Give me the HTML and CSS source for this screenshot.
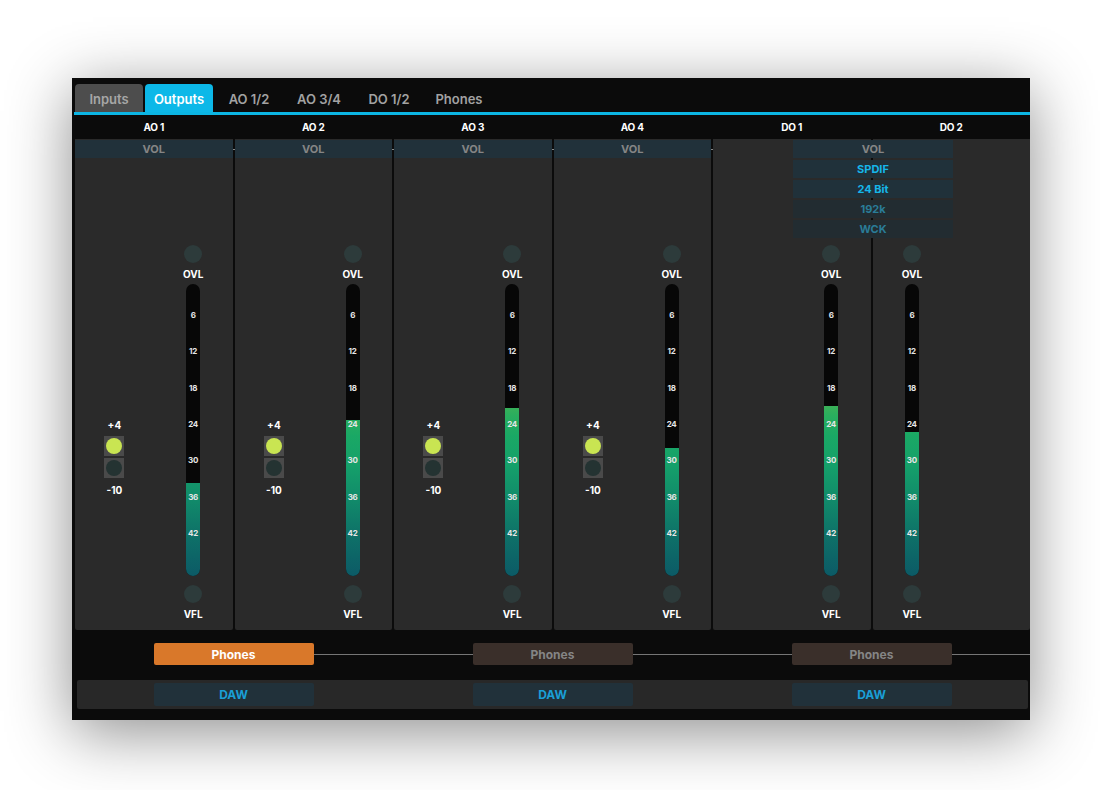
FILE: index.html
```html
<!DOCTYPE html>
<html>
<head>
<meta charset="utf-8">
<link rel="stylesheet" href="styles.css">
</head>
<body>
<div class="window">
  <nav class="tabs">
    <div class="tab tab-dim">Inputs</div>
    <div class="tab tab-active">Outputs</div>
    <div class="tab">AO 1/2</div>
    <div class="tab">AO 3/4</div>
    <div class="tab">DO 1/2</div>
    <div class="tab">Phones</div>
  </nav>

  <div class="mixer">
    <!-- AO 1/2 -->
    <section class="pair">
      <div class="pair-head"><div class="ch-name">AO 1</div><div class="ch-name">AO 2</div></div>
      <div class="pair-body">
        <div class="strip">
          <div class="vol">VOL</div>
          <div class="strip-main">
            <div class="switch-side">
              <div class="lbl">+4</div>
              <div class="sw sw-first"><span class="dot dot-on"></span></div>
              <div class="sw"><span class="dot"></span></div>
              <div class="lbl lbl-low">-10</div>
            </div>
            <div class="meter-side">
              <div class="led"></div>
              <div class="lbl lbl-led">OVL</div>
              <div class="meter"><div class="fill" style="height:93px"></div><div class="scale"><span>6</span><span>12</span><span>18</span><span>24</span><span>30</span><span>36</span><span>42</span></div></div>
              <div class="led led-bottom"></div>
              <div class="lbl lbl-led">VFL</div>
            </div>
          </div>
        </div>
        <div class="strip">
          <div class="vol">VOL</div>
          <div class="strip-main">
            <div class="switch-side">
              <div class="lbl">+4</div>
              <div class="sw sw-first"><span class="dot dot-on"></span></div>
              <div class="sw"><span class="dot"></span></div>
              <div class="lbl lbl-low">-10</div>
            </div>
            <div class="meter-side">
              <div class="led"></div>
              <div class="lbl lbl-led">OVL</div>
              <div class="meter"><div class="fill" style="height:156px"></div><div class="scale"><span>6</span><span>12</span><span>18</span><span>24</span><span>30</span><span>36</span><span>42</span></div></div>
              <div class="led led-bottom"></div>
              <div class="lbl lbl-led">VFL</div>
            </div>
          </div>
        </div>
      </div>
    </section>

    <!-- AO 3/4 -->
    <section class="pair">
      <div class="pair-head"><div class="ch-name">AO 3</div><div class="ch-name">AO 4</div></div>
      <div class="pair-body">
        <div class="strip">
          <div class="vol">VOL</div>
          <div class="strip-main">
            <div class="switch-side">
              <div class="lbl">+4</div>
              <div class="sw sw-first"><span class="dot dot-on"></span></div>
              <div class="sw"><span class="dot"></span></div>
              <div class="lbl lbl-low">-10</div>
            </div>
            <div class="meter-side">
              <div class="led"></div>
              <div class="lbl lbl-led">OVL</div>
              <div class="meter"><div class="fill" style="height:168px"></div><div class="scale"><span>6</span><span>12</span><span>18</span><span>24</span><span>30</span><span>36</span><span>42</span></div></div>
              <div class="led led-bottom"></div>
              <div class="lbl lbl-led">VFL</div>
            </div>
          </div>
        </div>
        <div class="strip">
          <div class="vol">VOL</div>
          <div class="strip-main">
            <div class="switch-side">
              <div class="lbl">+4</div>
              <div class="sw sw-first"><span class="dot dot-on"></span></div>
              <div class="sw"><span class="dot"></span></div>
              <div class="lbl lbl-low">-10</div>
            </div>
            <div class="meter-side">
              <div class="led"></div>
              <div class="lbl lbl-led">OVL</div>
              <div class="meter"><div class="fill" style="height:128px"></div><div class="scale"><span>6</span><span>12</span><span>18</span><span>24</span><span>30</span><span>36</span><span>42</span></div></div>
              <div class="led led-bottom"></div>
              <div class="lbl lbl-led">VFL</div>
            </div>
          </div>
        </div>
      </div>
    </section>

    <!-- DO 1/2 -->
    <section class="pair">
      <div class="pair-head"><div class="ch-name">DO 1</div><div class="ch-name">DO 2</div></div>
      <div class="pair-body">
        <div class="strip">
          <div class="vol-space"></div>
          <div class="strip-main">
            <div class="empty-side"></div>
            <div class="meter-side">
              <div class="led"></div>
              <div class="lbl lbl-led">OVL</div>
              <div class="meter"><div class="fill" style="height:170px"></div><div class="scale"><span>6</span><span>12</span><span>18</span><span>24</span><span>30</span><span>36</span><span>42</span></div></div>
              <div class="led led-bottom"></div>
              <div class="lbl lbl-led">VFL</div>
            </div>
          </div>
        </div>
        <div class="strip">
          <div class="vol-space"></div>
          <div class="strip-main">
            <div class="meter-side">
              <div class="led"></div>
              <div class="lbl lbl-led">OVL</div>
              <div class="meter"><div class="fill" style="height:144px"></div><div class="scale"><span>6</span><span>12</span><span>18</span><span>24</span><span>30</span><span>36</span><span>42</span></div></div>
              <div class="led led-bottom"></div>
              <div class="lbl lbl-led">VFL</div>
            </div>
            <div class="empty-side"></div>
          </div>
        </div>
      </div>
      <div class="digital-stack">
        <div class="ds-row ds-vol">VOL</div>
        <div class="ds-row ds-on">SPDIF</div>
        <div class="ds-row ds-on">24 Bit</div>
        <div class="ds-row ds-off">192k</div>
        <div class="ds-row ds-off">WCK</div>
      </div>
    </section>
  </div>

  <div class="phones-row">
    <div class="btn phones phones-on">Phones</div>
    <div class="btn phones">Phones</div>
    <div class="btn phones">Phones</div>
  </div>

  <div class="daw-row">
    <div class="btn daw">DAW</div>
    <div class="btn daw">DAW</div>
    <div class="btn daw">DAW</div>
  </div>
</div>
</body>
</html>
```

FILE: styles.css
```css
* { box-sizing: border-box; }

html { background: #ffffff; }

body {
  margin: 0;
  padding: 78px 0 70px 72px;
  min-height: 790px;
  background: #ffffff;
  font-family: Inter, "Noto Sans", "Liberation Sans", sans-serif;
}

.window {
  width: 958px;
  height: 642px;
  background: #0b0b0b;
  box-shadow: 0 12px 60px rgba(0, 0, 0, 0.45);
  overflow: hidden;
  display: flex;
  flex-direction: column;
}

/* ---------- tabs ---------- */
.tabs {
  display: flex;
  gap: 2px;
  height: 37px;
  margin-left: 2px;
  padding: 6px 0 0 1px;
  border-bottom: 3px solid #0cb6e4;
}

.tab {
  width: 68px;
  height: 28px;
  padding-top: 2px;
  display: flex;
  align-items: center;
  justify-content: center;
  font-size: 13px;
  font-weight: 600;
  color: #a2a2a2;
  border-radius: 4px 4px 0 0;
}

.tab-dim { background: #4d4d4d; color: #a6a6a6; }
.tab-active { background: #0cb8e8; color: #ffffff; }

/* ---------- mixer ---------- */
.mixer {
  display: flex;
  gap: 2px;
  padding-left: 3px;
}

.pair {
  width: 317px;
  position: relative;
  display: flex;
  flex-direction: column;
}

.pair-head {
  display: grid;
  grid-template-columns: 1fr 1fr;
  gap: 2px;
  height: 24px;
  align-items: center;
}

.ch-name {
  text-align: center;
  color: #ffffff;
  font-size: 10px;
  font-weight: 700;
  line-height: 10px;
  letter-spacing: -0.2px;
}

.pair-body {
  display: grid;
  grid-template-columns: 1fr 1fr;
  gap: 2px;
  height: 491px;
}

.strip {
  background: #2a2a2a;
  display: flex;
  flex-direction: column;
  border-radius: 0 0 2px 2px;
}

.vol {
  position: relative;
  margin-top: 1px;
  height: 18px;
  background: #21313a;
  color: #858585;
  font-size: 11px;
  font-weight: 700;
  display: flex;
  align-items: center;
  justify-content: center;
}

.vol::after {
  content: "";
  position: absolute;
  right: -2px;
  top: 9px;
  width: 2px;
  height: 1px;
  background: #8a8a8a;
}

.vol-space {
  margin-top: 1px;
  height: 18px;
}

.strip-main {
  flex: 1;
  display: grid;
  grid-template-columns: 1fr 1fr;
}

.lbl {
  color: #ffffff;
  font-size: 10px;
  font-weight: 700;
  line-height: 10px;
  text-align: center;
}

/* switch */
.switch-side {
  display: flex;
  flex-direction: column;
  align-items: center;
  padding-top: 262px;
}

.sw {
  width: 20px;
  height: 20px;
  background: #4a4a4a;
  display: flex;
  align-items: center;
  justify-content: center;
  margin-top: 2px;
}

.sw-first { margin-top: 6px; }

.dot {
  width: 16px;
  height: 16px;
  border-radius: 50%;
  background: #243332;
}

.dot-on { background: #c9e552; }

.lbl-low { margin-top: 7px; }

/* meter */
.meter-side {
  display: flex;
  flex-direction: column;
  align-items: center;
  padding-top: 87px;
}

.led {
  width: 18px;
  height: 18px;
  border-radius: 50%;
  background: #2d3b3b;
}

.led-bottom { margin-top: 9px; }

.lbl-led { margin-top: 6px; }

.meter {
  position: relative;
  margin-top: 5px;
  width: 14px;
  height: 292px;
  border-radius: 7px;
  background: #070707;
  overflow: hidden;
}

.fill {
  position: absolute;
  left: 0;
  right: 0;
  bottom: 0;
  background: linear-gradient(to bottom,
    #6cc044 0%, #4db451 38%, #2aae5e 45%, #1aa865 52%,
    #15a06a 62%, #118a6a 74%, #0e7168 86%, #0c5a66 100%);
  background-size: 100% 292px;
  background-position: bottom;
}

.scale {
  position: relative;
  display: flex;
  flex-direction: column;
  padding-top: 13px;
}

.scale span {
  height: 36.33px;
  display: flex;
  align-items: center;
  justify-content: center;
  font-size: 8px;
  font-weight: 700;
  letter-spacing: -0.2px;
  color: #e6e6e6;
}

/* digital output settings */
.digital-stack {
  position: absolute;
  left: 80px;
  top: 25px;
  width: 160px;
  display: flex;
  flex-direction: column;
  gap: 2px;
}

.ds-row {
  height: 18px;
  display: flex;
  align-items: center;
  justify-content: center;
  font-size: 11px;
  font-weight: 700;
}

.ds-vol { background: #21313a; color: #858585; }
.ds-on { background: #20313a; color: #16b6ea; }
.ds-off { background: #222c31; color: #2a7c98; }

/* ---------- bottom rows ---------- */
.btn {
  width: 160px;
  display: flex;
  align-items: center;
  justify-content: center;
  font-size: 12px;
  font-weight: 700;
  border-radius: 2px;
  position: relative;
}

.phones-row {
  position: relative;
  display: flex;
  gap: 159px;
  height: 50px;
  padding: 13px 0 0 81.5px;
}

.phones-row::before {
  content: "";
  position: absolute;
  left: 161px;
  right: 0;
  top: 24px;
  height: 1px;
  background: #767676;
}

.phones {
  height: 22px;
  background: #3a2f2a;
  color: #858585;
}

.phones-on {
  background: #d9782a;
  color: #ffffff;
}

.daw-row {
  display: flex;
  gap: 159px;
  height: 29px;
  margin: 0 2px 0 5px;
  padding: 3px 0 3px 76.5px;
  background: #282828;
  border-radius: 2px;
}

.daw {
  height: 23px;
  background: #21313a;
  color: #1a9fd6;
}
```
